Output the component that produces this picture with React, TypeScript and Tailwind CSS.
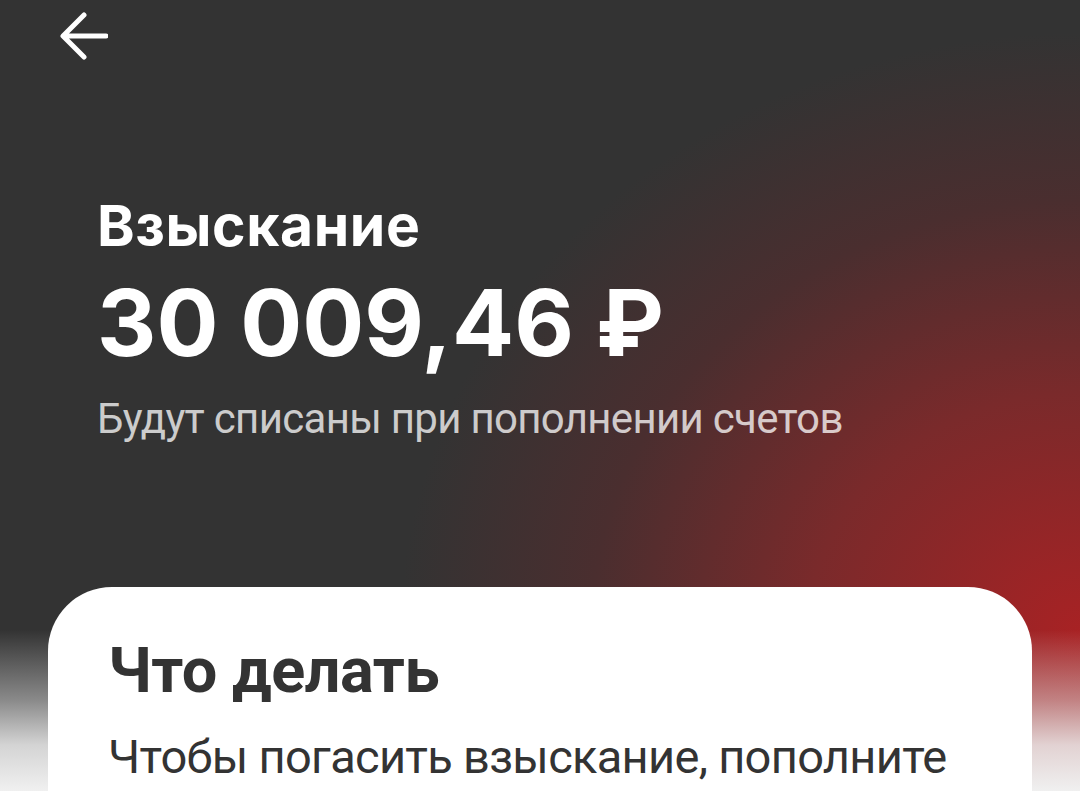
import React from "react";

export default function App() {
  return (
    <div className="relative flex h-[791px] w-full flex-col overflow-hidden bg-[#f0f0f0] bg-[image:linear-gradient(180deg,rgba(240,240,240,0)_630px,rgba(240,240,240,0.46)_700px,rgba(240,240,240,0.85)_745px,#f0f0f0_791px),radial-gradient(680px_600px_at_100%_80%,#a82224_0%,#7a2a2b_40%,#4a2e2f_72%,#333333_100%)] font-['Roboto',sans-serif]">
      <div className="pl-[58px] pt-[12px]">
        <svg width="50" height="48" viewBox="0 0 50 48" fill="none">
          <path
            d="M26 3 L5 24 L26 45 M5.5 24 H48"
            stroke="#ffffff"
            strokeWidth="5"
            strokeLinecap="round"
            strokeLinejoin="round"
          />
        </svg>
      </div>

      <div className="pl-[97px] pt-[137px]">
        <h1 className="font-['Inter',sans-serif] text-[57px] font-bold leading-[57px] tracking-[0.6px] text-white">
          Взыскание
        </h1>
        <div className="mt-[23px] font-['Inter',sans-serif] text-[92px] font-bold leading-[92px] text-white">
          30 009,46 ₽
        </div>
        <p className="mt-[29px] text-[42px] leading-[42px] tracking-[-0.7px] text-white/75">
          Будут списаны при пополнении счетов
        </p>
      </div>

      <div className="mx-[48px] mt-[147px] flex-1 rounded-t-[64px] bg-white pl-[60px] pt-[52px]">
        <h2 className="text-[63px] font-bold leading-[63px] tracking-[-0.5px] text-[#333333]">Что делать</h2>
        <p className="mt-[31px] whitespace-nowrap text-[47px] leading-[47px] tracking-[-0.7px] text-[#333333]">
          Чтобы погасить взыскание, пополните
        </p>
      </div>
    </div>
  );
}
